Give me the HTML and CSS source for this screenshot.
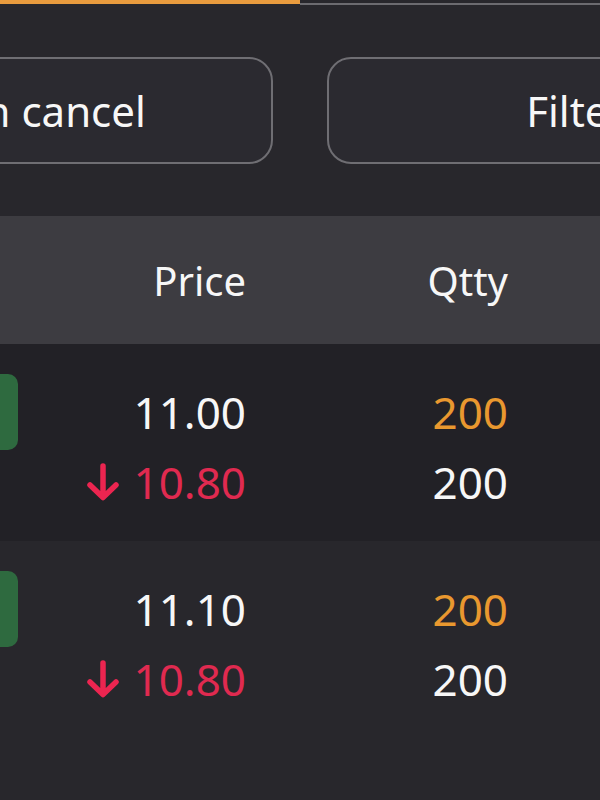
FILE: index.html
```html
<!DOCTYPE html>
<html lang="en">
<head>
<meta charset="utf-8">
<title>Orders</title>
<link rel="stylesheet" href="styles.css">
</head>
<body>
<div class="tabs">
  <div class="tab tab-active"></div>
  <div class="tab tab-idle"></div>
</div>
<div class="actions">
  <button class="btn">Open cancel</button>
  <button class="btn">Filter</button>
</div>
<div class="table">
  <div class="row head">
    <div class="cell"></div>
    <div class="cell num">Price</div>
    <div class="cell num">Qtty</div>
    <div class="cell"></div>
  </div>
  <div class="row item dark">
    <div class="cell"><span class="badge"></span></div>
    <div class="cell num stack">
      <span class="v">11.00</span>
      <span class="v down"><svg class="arrow" viewBox="0 0 34 38" width="34" height="38"><path d="M17 3 V34 M4 22 L17 34.5 L30 22" fill="none" stroke="#ec2550" stroke-width="5.5" stroke-linecap="round" stroke-linejoin="round"/></svg>10.80</span>
    </div>
    <div class="cell num stack">
      <span class="v orange">200</span>
      <span class="v">200</span>
    </div>
    <div class="cell"></div>
  </div>
  <div class="row item">
    <div class="cell"><span class="badge"></span></div>
    <div class="cell num stack">
      <span class="v">11.10</span>
      <span class="v down"><svg class="arrow" viewBox="0 0 34 38" width="34" height="38"><path d="M17 3 V34 M4 22 L17 34.5 L30 22" fill="none" stroke="#ec2550" stroke-width="5.5" stroke-linecap="round" stroke-linejoin="round"/></svg>10.80</span>
    </div>
    <div class="cell num stack">
      <span class="v orange">200</span>
      <span class="v">200</span>
    </div>
    <div class="cell"></div>
  </div>
</div>
</body>
</html>
```
FILE: styles.css
```css
html, body {
  margin: 0;
  padding: 0;
  background: #28272c;
  font-family: "Noto Sans", "Open Sans", sans-serif;
  color: #f7f7f7;
  overflow: hidden;
}
.tabs {
  display: flex;
  height: 5px;
}
.tab {
  flex: 1;
}
.tab-active {
  background: #e99b3e;
  height: 4px;
}
.tab-idle {
  border-bottom: 2px solid #6c6b70;
  height: 3px;
}
.actions {
  display: flex;
  gap: 54px;
  margin-left: -225px;
  padding-top: 52px;
}
.btn {
  flex: 0 0 498px;
  height: 107px;
  box-sizing: border-box;
  border: 2px solid #6f6e73;
  border-radius: 24px;
  background: #2b2a30;
  color: #f7f7f7;
  font-family: "Noto Sans", sans-serif;
  font-size: 42px;
  font-weight: 400;
  padding: 0;
}
.table {
  margin-top: 52px;
}
.row {
  display: grid;
  grid-template-columns: 60px 186px 262px 1fr;
}
.head {
  background: #3d3c41;
  height: 128px;
  align-items: center;
  font-size: 40px;
}
.num {
  text-align: right;
}
.item {
  height: 197px;
  box-sizing: border-box;
  padding-top: 30px;
  align-items: start;
}
.dark {
  background: #222126;
}
.badge {
  display: block;
  width: 18px;
  height: 76px;
  background: #2e6a3f;
  border-radius: 0 10px 10px 0;
}
.stack {
  display: flex;
  flex-direction: column;
  align-items: flex-end;
  padding-top: 3px;
  font-size: 44px;
  line-height: 70px;
}
.v {
  display: flex;
  align-items: center;
}
.down {
  color: #e02a50;
}
.orange {
  color: #e9982f;
}
.arrow {
  margin-right: 14px;
}
```
